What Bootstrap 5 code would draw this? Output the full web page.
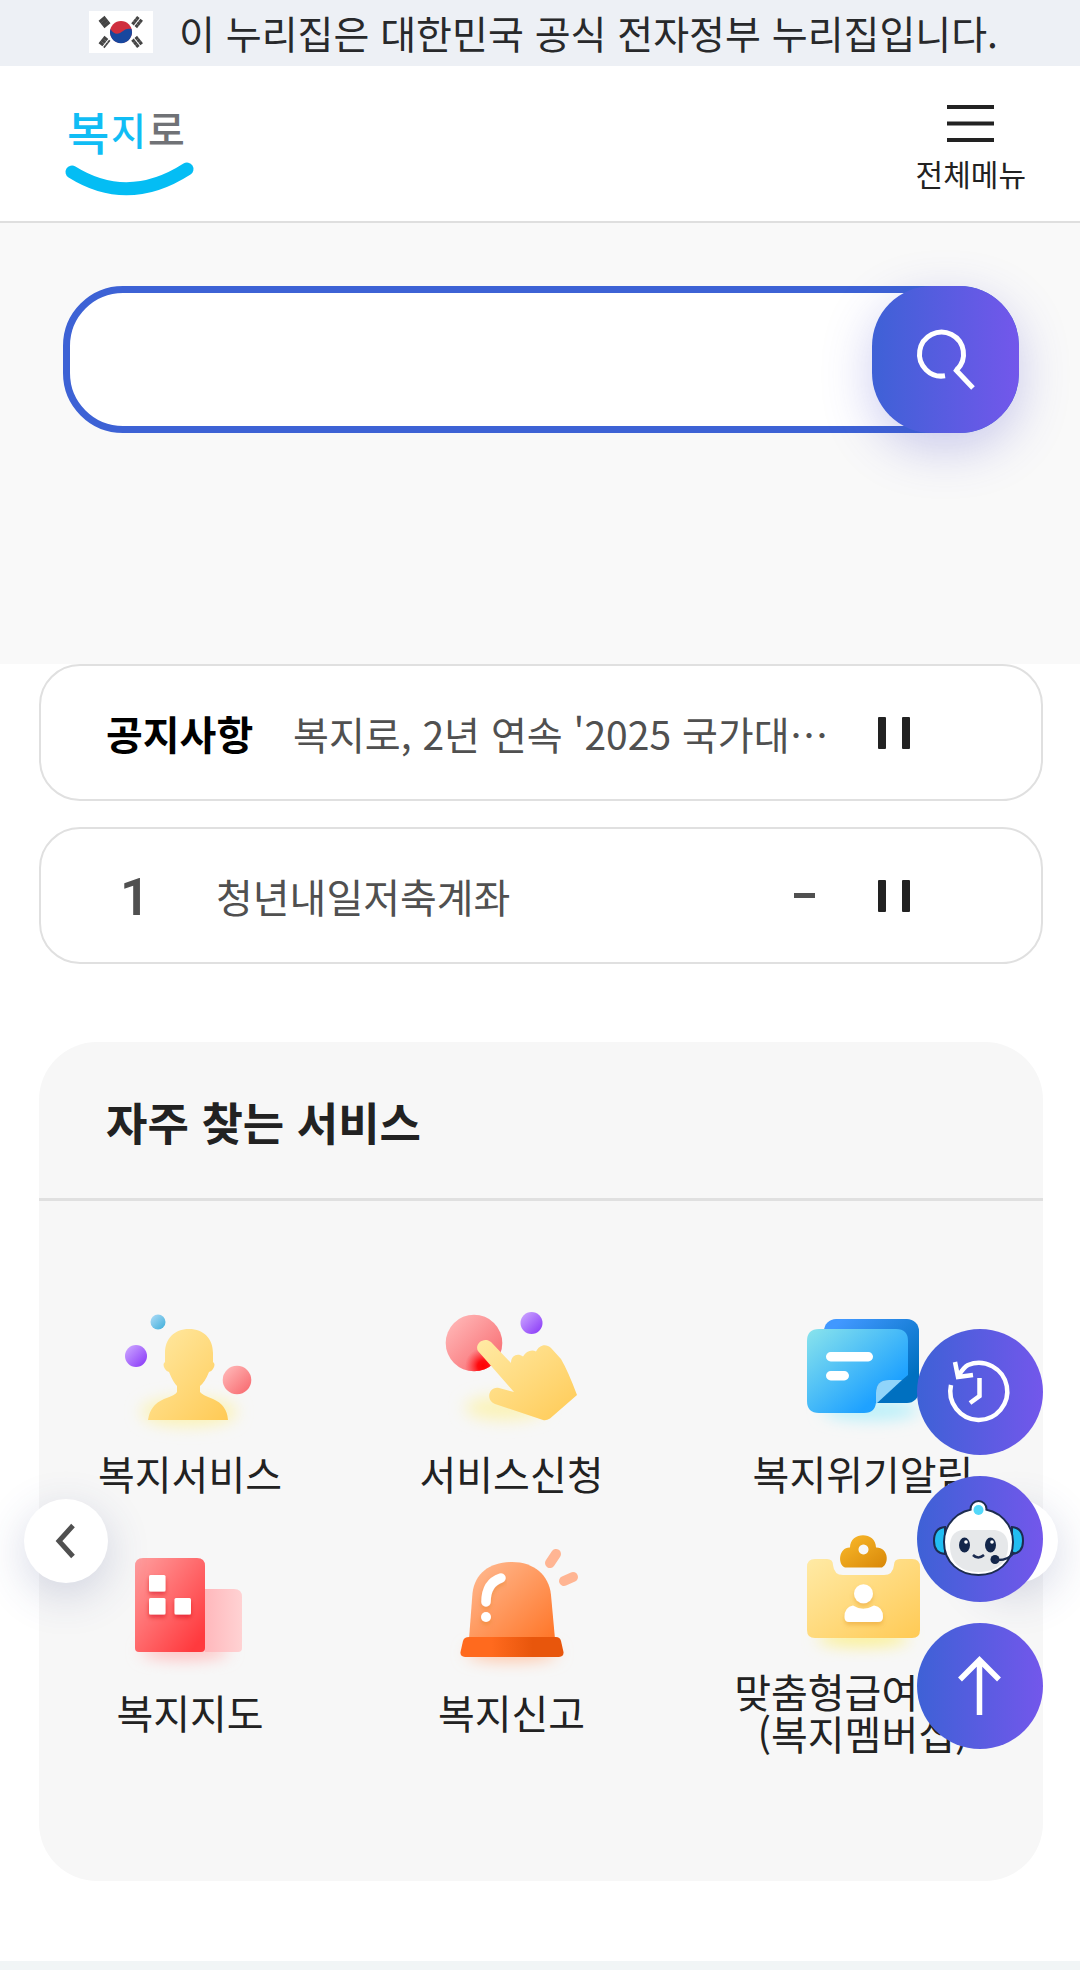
<!DOCTYPE html>
<html lang="ko">
<head>
<meta charset="utf-8">
<meta name="viewport" content="width=device-width, initial-scale=1">
<title>복지로</title>
<link href="https://cdn.jsdelivr.net/npm/bootstrap@5.3.0/dist/css/bootstrap.min.css" rel="stylesheet">
<style>
body{font-family:"Noto Sans CJK KR","Noto Sans",sans-serif;font-size:40px;line-height:42px;color:#222;background:#fff}
a{color:inherit;text-decoration:none}
svg{display:block;overflow:visible}
.gov-bar{background:#edf0f5;height:66px;font-size:39px;gap:26px;padding:0 86px 2px 89px;color:#28292b}
.site-head{height:157px;padding:0 54px 0 66px;border-bottom:2px solid #dfdfdf}
.menu-btn{font-size:30px;line-height:30px;gap:16px;margin-top:5px}
.hero{background:#f9f9f9;padding:63px 61px 231px 63px}
.search-form{height:147px;border:7px solid #3d62d5;border-radius:60px;background:#fff}
.search-input{font-size:40px;border:0;border-radius:60px;background:transparent;box-shadow:none!important;padding:0 40px}
.search-btn{width:147px;height:147px;margin:-7px;border-radius:60px;box-shadow:0 15px 50px rgba(70,70,200,.27)}
.grad{background:linear-gradient(90deg,#3e61d6,#7357eb);border:0;padding:0}
.main-area{padding:0 37px 80px 39px}
.ticker{height:137px;border:2px solid #e0e0e0;border-radius:41px;padding:0 131px 0 65px;background:#fff}
.ticker-name{width:187px;color:#000}
.ticker-rank{width:110px;padding:4px 0 0 14px;font-family:Roboto,sans-serif;font-size:52px;font-weight:600;color:#505050}
.ticker-text{color:#505050;min-width:0}
.ticker-news{font-size:39px}
.tickers{gap:26px}
.plain-btn{border:0;background:none;padding:0;color:inherit}
.pause-btn{width:32px;margin-left:55px}
.trend{margin-right:8px}
.quick{margin-top:78px;background:#f7f7f7;border-radius:58px}
.quick-head{height:159px;border-bottom:3px solid #e0e0e0;padding:4px 67px 0}
.quick-title{font-size:45px;line-height:50px}
.quick-body{padding:102px 50px 125px 51px}
.quick-grid{display:grid;grid-template-columns:200px 1fr 260px;row-gap:25px}
.tile-icon{width:160px;height:130px}
.tile-label{height:84px;padding-bottom:4px;white-space:nowrap;color:#222}
.slide-btn{width:84px;height:84px;background:#fff;border:0;padding:0;box-shadow:0 12px 45px rgba(50,65,130,.2)}
.slide-prev{left:-15px}
.slide-next{right:-15px}
.fabs{right:37px;bottom:221px;gap:21px;z-index:5}
.fab{width:126px;height:126px}
.foot{background:#f1f5f6;min-height:9px}
</style>
</head>
<body>
<svg width="0" height="0" class="position-absolute" aria-hidden="true">
<defs>
<linearGradient id="gY" x1="0" y1="0" x2="1" y2="1"><stop offset="0" stop-color="#ffeaa5"/><stop offset="1" stop-color="#ffca55"/></linearGradient>
<linearGradient id="gP" x1="0" y1="0" x2="1" y2="1"><stop offset=".1" stop-color="#c8a0ff"/><stop offset=".9" stop-color="#8e40f8"/></linearGradient>
<linearGradient id="gB" x1="0" y1="0" x2="1" y2="1"><stop offset=".1" stop-color="#a5d8f5"/><stop offset=".9" stop-color="#48b2dc"/></linearGradient>
<linearGradient id="gR" x1="0" y1="0" x2="1" y2="1"><stop offset=".1" stop-color="#ffb5b5"/><stop offset=".9" stop-color="#f86d72"/></linearGradient>
<radialGradient id="gHot" gradientUnits="userSpaceOnUse" cx="51" cy="63" r="18"><stop offset="0" stop-color="#ff0000"/><stop offset=".3" stop-color="#ff0c10"/><stop offset="1" stop-color="#ff3a40" stop-opacity="0"/></radialGradient>
<linearGradient id="gF" x1="0" y1="0" x2="1" y2="1"><stop offset="0" stop-color="#8ae4ec"/><stop offset=".75" stop-color="#1fa2ff"/><stop offset="1" stop-color="#1a9cff"/></linearGradient>
<linearGradient id="gK" x1="0" y1="0" x2="1" y2="1"><stop offset=".1" stop-color="#4198ff"/><stop offset=".8" stop-color="#0070c0"/></linearGradient>
<linearGradient id="gT" x1="0" y1="0" x2="1" y2="1"><stop offset="0" stop-color="#ff9f9f"/><stop offset=".9" stop-color="#ff3a3e"/></linearGradient>
<linearGradient id="gS"><stop offset="0" stop-color="#ffb8bc"/><stop offset="1" stop-color="#ffd2d3"/></linearGradient>
<linearGradient id="gO" x1="0" y1="0" x2="1" y2="1"><stop offset=".1" stop-color="#ffb58a"/><stop offset="1" stop-color="#ff7527"/></linearGradient>
<linearGradient id="gO2"><stop offset=".3" stop-color="#ff6a1e"/><stop offset=".7" stop-color="#e8560c"/></linearGradient>
<linearGradient id="gC" x1="0" y1="0" x2="1" y2="1"><stop offset="0" stop-color="#fbbb2c"/><stop offset="1" stop-color="#d88708"/></linearGradient>
<filter id="soft" x="-50%" y="-100%" width="200%" height="300%"><feGaussianBlur stdDeviation="8"/></filter>
<filter id="drop" x="-30%" y="-30%" width="160%" height="180%"><feDropShadow dx="0" dy="3" stdDeviation="2" flood-color="#d07800" flood-opacity=".3"/></filter>
<filter id="dropR" x="-30%" y="-30%" width="160%" height="180%"><feDropShadow dx="0" dy="3" stdDeviation="2" flood-color="#d00010" flood-opacity=".5"/></filter>
</defs>
</svg>

<div class="gov-bar d-flex align-items-center">
  <svg width="64" height="42" viewBox="0 0 64 42" role="img" aria-label="태극기">
    <rect width="64" height="42" fill="#fff"/>
    <circle cx="32" cy="21" r="11" fill="#cf2e3e"/>
    <path d="M21.500 18A11 11 0 1 0 42.500 18C39 17 36 18 32.500 21C29 24 24 23 21.500 18z" fill="#17479e"/>
    <g stroke="#444" stroke-width="3">
      <path d="M10.500 11l6-5M12.500 13.500l6-5M14.500 16l6-5"/>
      <path d="M53 11l-6-5M51 13.500l-6-5M49 16l-6-5" stroke-dasharray="3.300 1"/>
      <path d="M10.500 31l6 5M12.500 28.500l6 5M14.500 26l6 5" stroke-dasharray="5 1"/>
      <path d="M53 31l-6 5M51 28.500l-6 5M49 26l-6 5" stroke-dasharray="3.300 1"/>
    </g>
  </svg>
  <span class="text-nowrap">이 누리집은 대한민국 공식 전자정부 누리집입니다.</span>
</div>

<header class="site-head d-flex align-items-center justify-content-between">
  <a href="#" aria-label="복지로 홈">
    <svg width="128" height="104" viewBox="0 0 128 104" font-family="'Noto Sans CJK KR',sans-serif" font-weight="500">
      <text x="1" y="58" font-size="46" fill="#10bdf5">복</text>
      <text x="45" y="53" font-size="38" fill="#10bdf5">지</text>
      <text x="82" y="53" font-size="40" fill="#707276">로</text>
      <path d="M6 80Q62 115 121 77" fill="none" stroke="#04bdf4" stroke-width="13" stroke-linecap="round"/>
    </svg>
  </a>
  <button type="button" class="menu-btn plain-btn d-flex flex-column align-items-center">
    <svg width="47" height="37" viewBox="0 0 47 37" stroke="#222" stroke-width="4"><path d="M0 2H47M0 18.500H47M0 35H47"/></svg>
    <span>전체메뉴</span>
  </button>
</header>

<section class="hero">
  <form class="search-form d-flex" role="search">
    <input type="search" class="search-input form-control h-100" aria-label="통합검색">
    <button type="button" class="search-btn grad flex-shrink-0" aria-label="검색">
      <svg width="147" height="147" viewBox="0 0 147 147" fill="none" stroke="#fff" stroke-width="5"><path d="M73 89.800A22 22 0 1 1 85 83.700L83 83L101 102"/></svg>
    </button>
  </form>
</section>

<main class="main-area">
  <div class="tickers d-flex flex-column">
    <div class="ticker d-flex align-items-center">
      <strong class="ticker-name flex-shrink-0">공지사항</strong>
      <a href="#" class="ticker-text ticker-news text-nowrap flex-grow-1">복지로, 2년 연속 '2025 국가대⋯</a>
      <button type="button" class="pause-btn plain-btn flex-shrink-0" aria-label="공지사항 정지"><svg width="32" height="32" viewBox="0 0 32 32" fill="#222"><rect width="8" height="32" rx="1"/><rect x="24" width="8" height="32" rx="1"/></svg></button>
    </div>
    <div class="ticker d-flex align-items-center">
      <span class="ticker-rank flex-shrink-0">1</span>
      <a href="#" class="ticker-text text-nowrap flex-grow-1">청년내일저축계좌</a>
      <svg class="trend" width="21" height="5" viewBox="0 0 21 5" role="img" aria-label="변동 없음"><rect width="21" height="5" fill="#505050"/></svg>
      <button type="button" class="pause-btn plain-btn flex-shrink-0" aria-label="인기검색어 정지"><svg width="32" height="32" viewBox="0 0 32 32" fill="#222"><rect width="8" height="32" rx="1"/><rect x="24" width="8" height="32" rx="1"/></svg></button>
    </div>
  </div>

  <section class="quick">
    <div class="quick-head d-flex align-items-center"><h2 class="quick-title fw-bold m-0">자주 찾는 서비스</h2></div>
    <div class="quick-body position-relative">
      <div class="quick-grid">
        <a href="#" class="d-flex flex-column align-items-center">
          <svg class="tile-icon" viewBox="0 0 160 130">
            <ellipse cx="79" cy="109" rx="48" ry="14" fill="#fbf3b4" filter="url(#soft)"/>
            <circle cx="48" cy="19" r="7.500" fill="url(#gB)"/><circle cx="26" cy="53" r="11" fill="url(#gP)"/><circle cx="127" cy="77" r="14.300" fill="url(#gR)"/>
            <path d="M79 26C94 26 103 36 103 50V59Q106 61 103 66Q101 69 99 69Q95 79 90 83V89Q92 92 103 96Q117 102 118 117H38Q40 102 54 96Q66 92 67 89V83Q63 79 59 69Q57 69 55 66Q52 61 55 59V50C55 36 64 26 79 26z" fill="url(#gY)"/>
          </svg>
          <span class="tile-label d-flex align-items-center">복지서비스</span>
        </a>
        <a href="#" class="d-flex flex-column align-items-center">
          <svg class="tile-icon" viewBox="0 0 160 130">
            <ellipse cx="73" cy="105" rx="40" ry="12" fill="#fbf3b8" filter="url(#soft)"/>
            <circle cx="42" cy="40" r="28.300" fill="url(#gR)"/><circle cx="42" cy="40" r="28.300" fill="url(#gHot)"/>
            <circle cx="99.500" cy="20" r="11" fill="url(#gP)"/>
            <path d="M46 48C42 41 52 33 59 39L79 60C79 52 86 50 91 53.500C94 48 100 46 104 48.500C107 42 114 40 119 45L129 56Q136 68 145 92L118 115.500Q114 118 111 117L63 101C53 97 57 83 67 85L82 89z" fill="url(#gY)"/>
          </svg>
          <span class="tile-label d-flex align-items-center">서비스신청</span>
        </a>
        <a href="#" class="d-flex flex-column align-items-center">
          <svg class="tile-icon" viewBox="0 0 160 130">
            <ellipse cx="88" cy="107" rx="48" ry="10" fill="#b8f0fa" filter="url(#soft)"/>
            <rect x="41" y="16" width="95" height="84" rx="12" fill="url(#gK)"/>
            <path d="M36 26H113Q125 26 125 38V72L119 77H106Q93 77 93 90V98Q93 110 81 110H36Q24 110 24 98V38Q24 26 36 26z" fill="url(#gF)"/>
            <path d="M119 77H106Q93 77 93 90V101z" fill="#90d4fa"/>
            <g fill="#fff"><rect x="43" y="49" width="47" height="9.500" rx="4.700"/><rect x="43" y="68" width="23" height="9.500" rx="4.700"/></g>
          </svg>
          <span class="tile-label d-flex align-items-center">복지위기알림</span>
        </a>
        <a href="#" class="d-flex flex-column align-items-center">
          <svg class="tile-icon" viewBox="0 0 160 130">
            <ellipse cx="75" cy="109" rx="44" ry="8" fill="#ffbcbc" filter="url(#soft)"/>
            <path d="M95 47H124Q132 47 132 55V106Q132 110 128 110H95z" fill="url(#gS)"/>
            <path d="M33 16H87Q95 16 95 24V106Q95 110 91 110H29Q25 110 25 106V24Q25 16 33 16z" fill="url(#gT)"/>
            <g fill="#fff" filter="url(#dropR)"><rect x="39" y="33" width="16.500" height="16.500" rx="1.500"/><rect x="39" y="56" width="16.500" height="16.500" rx="1.500"/><rect x="64.500" y="56" width="16.500" height="16.500" rx="1.500"/></g>
          </svg>
          <span class="tile-label d-flex align-items-center">복지지도</span>
        </a>
        <a href="#" class="d-flex flex-column align-items-center">
          <svg class="tile-icon" viewBox="0 0 160 130">
            <ellipse cx="80" cy="111" rx="46" ry="8" fill="#ffc4a4" filter="url(#soft)"/>
            <path d="M37 97L40.500 51C43 31 58 20 80 20C102 20 117 33 119 53L123 97z" fill="url(#gO)"/>
            <path d="M37 95H124Q128 95 129 99L131.500 110Q132 115 127 115H33Q28 115 28.500 110L31 99Q32 95 37 95z" fill="url(#gO2)"/>
            <g stroke="#ffb593" stroke-width="10" stroke-linecap="round"><path d="M124 12L118 21M141 35L132 39"/></g>
            <g filter="url(#drop)"><path d="M69 36Q54 41 54 60" fill="none" stroke="#fff" stroke-width="9.500" stroke-linecap="round"/><circle cx="54" cy="75" r="5" fill="#fff"/></g>
          </svg>
          <span class="tile-label d-flex align-items-center">복지신고</span>
        </a>
        <a href="#" class="d-flex flex-column align-items-center">
          <svg class="tile-icon" viewBox="0 0 160 130">
            <ellipse cx="80" cy="96" rx="46" ry="8" fill="#fbf08c" filter="url(#soft)"/>
            <path d="M32 17H44Q50 17 50 23Q51 33 60 33H101Q110 33 111 23Q111 17 117 17H129Q137 17 137 25V88Q137 96 129 96H32Q24 96 24 88V25Q24 17 32 17z" fill="url(#gY)"/>
            <path fill-rule="evenodd" d="M62 25.500C54 22 56 5 67 5.500C67-11 93-11 93 5.500C105 5 107 21 99 25.500zM80.500 2.500a5 5 0 1 0 .01 0z" fill="url(#gC)"/>
            <g fill="#fff" filter="url(#drop)"><circle cx="80.500" cy="51.700" r="9.500"/><path d="M70 63.500Q80 70 91 63.500Q100 65 100 75Q100 80 95 80H66Q61.500 80 61.500 75Q61.500 65 70 63.500z"/></g>
          </svg>
          <span class="tile-label d-flex align-items-center text-center">맞춤형급여안내<br>(복지멤버십)</span>
        </a>
      </div>
      <button type="button" class="slide-btn slide-prev rounded-circle position-absolute top-50 translate-middle-y" aria-label="이전"><svg width="84" height="84" viewBox="0 0 84 84" fill="none" stroke="#505050" stroke-width="5"><path d="M49 26.500L35 42L49 57.500"/></svg></button>
      <button type="button" class="slide-btn slide-next rounded-circle position-absolute top-50 translate-middle-y" aria-label="다음"><svg width="84" height="84" viewBox="0 0 84 84" fill="none" stroke="#505050" stroke-width="5"><path d="M35 26.500L49 42L35 57.500"/></svg></button>
    </div>
  </section>
</main>

<footer class="foot"></footer>

<div class="fabs position-fixed d-flex flex-column">
  <button type="button" class="fab grad rounded-circle" aria-label="최근 본 서비스">
    <svg width="126" height="126" viewBox="0 0 126 126" fill="none" stroke="#fff" stroke-width="4.500"><path d="M34 56A28.500 28.500 0 1 0 51 36Q47 38 42 46"/><path d="M38 33L41 48L56 46M62.500 49V67L53 74"/></svg>
  </button>
  <button type="button" class="fab grad rounded-circle" aria-label="챗봇 상담">
    <svg width="126" height="126" viewBox="0 0 126 126">
      <g stroke="#1c2c50" stroke-width="2">
        <path d="M28 51Q17 52 17 65Q17 77 28 78zM95 51Q106 52 106 65Q106 77 95 78z" fill="#22bdf2"/>
        <circle cx="61.500" cy="33" r="8" fill="#fff"/>
        <path d="M61.500 33C83 33 96 49 96 66C96 87 80 99 61.500 99C43 99 27 87 27 66C27 49 40 33 61.500 33z" fill="#fff"/>
      </g>
      <circle cx="61.500" cy="34" r="7" fill="#fff"/><circle cx="61.500" cy="34" r="5" fill="#53d8fa"/>
      <path d="M45 54H78Q91 56 91 70C91 86 80 96 61.500 96C43 96 33 86 33 70Q33 56 45 54z" fill="#e6e8ea"/>
      <g fill="#13264a"><ellipse cx="47.500" cy="69" rx="5.500" ry="7.500"/><ellipse cx="73.500" cy="69" rx="5.500" ry="7.500"/><circle cx="78" cy="83.500" r="4.500"/></g>
      <g fill="#fff"><circle cx="49" cy="66" r="1.800"/><circle cx="75" cy="66" r="1.800"/></g>
      <path d="M56 79Q61 84 67 79M78 84Q92 85 97 76" fill="none" stroke="#1c2c50" stroke-width="2.500"/>
    </svg>
  </button>
  <button type="button" class="fab grad rounded-circle" aria-label="맨 위로">
    <svg width="126" height="126" viewBox="0 0 126 126" fill="none" stroke="#fff" stroke-width="5.500"><path d="M62.500 92V37M43 56.500L62.500 37L82 56.500"/></svg>
  </button>
</div>
<script src="https://cdn.jsdelivr.net/npm/bootstrap@5.3.0/dist/js/bootstrap.bundle.min.js"></script>
</body>
</html>
